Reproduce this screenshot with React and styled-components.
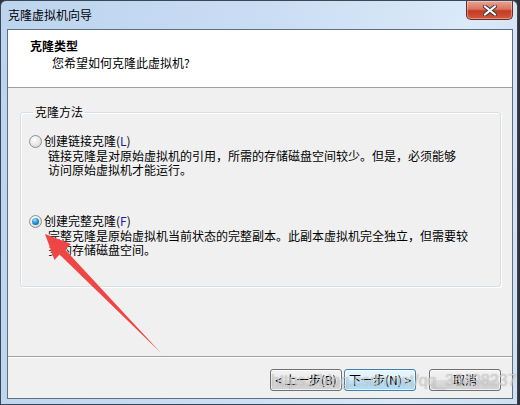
import React from 'react';
import styled, { createGlobalStyle } from 'styled-components';

const GlobalStyle = createGlobalStyle`
  html, body {
    margin: 0;
    padding: 0;
    background: #2f3337;
  }
  body {
    font-family: "Noto Sans CJK SC", "Liberation Sans", sans-serif;
    font-size: 12px;
    color: #000;
  }
`;

const Window = styled.div`
  position: relative;
  width: 516px;
  height: 403px;
  border: 1px solid #3a4756;
  border-radius: 6px 6px 0 0;
  background: linear-gradient(100deg, #bcd4ee 0%, #c9ddf3 45%, #dbe9f8 80%, #cfe0f3 100%);
  display: flex;
  flex-direction: column;
  overflow: hidden;
`;

const TitleBar = styled.div`
  height: 28px;
  display: flex;
  align-items: flex-start;
  justify-content: space-between;
  flex-shrink: 0;
`;

const Title = styled.span`
  margin: 5px 0 0 7px;
  line-height: 18px;
  font-size: 12px;
`;

const CloseButton = styled.div`
  width: 45px;
  height: 18px;
  margin-right: 4px;
  border: 1px solid #6b2a22;
  border-top: none;
  border-radius: 0 0 5px 5px;
  background: linear-gradient(to bottom, #e8a593 0%, #d9745f 45%, #c23a22 55%, #cf5a3f 100%);
  display: flex;
  align-items: center;
  justify-content: center;
  box-shadow: inset 0 0 0 1px rgba(255, 255, 255, 0.35);
`;

const Client = styled.div`
  flex: 1;
  margin: 0 4px 5px 6px;
  border: 1px solid #5e6f82;
  background: #f0f0f0;
  display: flex;
  flex-direction: column;
`;

const Header = styled.div`
  height: 58px;
  background: #fff;
  border-bottom: 1px solid #a0a0a0;
  padding: 7px 0 0 22px;
  box-sizing: border-box;
  flex-shrink: 0;
`;

const HeaderTitle = styled.div`
  font-weight: bold;
  line-height: 17px;
`;

const HeaderSub = styled.div`
  line-height: 17px;
  padding-left: 22px;
`;

const Body = styled.div`
  flex: 1;
  padding: 15px 11px 0 12px;
`;

const GroupBox = styled.fieldset`
  margin: 0;
  padding: 12px 8px 29px 8px;
  border: 1px solid #d5dfe5;
  border-radius: 3px;
  box-shadow: inset 1px 1px 0 #fff, 1px 1px 0 #fff;
`;

const Legend = styled.legend`
  margin-left: 4px;
  padding: 0 2px;
  line-height: 18px;
`;

const Option = styled.div`
  margin-top: ${p => p.$gap || 0}px;
`;

const OptionRow = styled.div`
  display: flex;
  align-items: center;
  gap: 2px;
  line-height: 16px;
`;

const Radio = styled.span`
  width: 11px;
  height: 11px;
  border-radius: 50%;
  border: 1px solid #8e8f8f;
  background: radial-gradient(circle at 40% 35%, #ffffff 0%, #e6e6e6 55%, #c9c9c9 100%);
  display: flex;
  align-items: center;
  justify-content: center;
  &::after {
    content: '';
    display: ${p => (p.$checked ? 'block' : 'none')};
    width: 7px;
    height: 7px;
    border-radius: 50%;
    background: radial-gradient(circle at 40% 30%, #9fe0ff 0%, #2a94d6 45%, #0b4f8f 100%);
  }
`;

const Mnemonic = styled.span`
  color: ${p => p.$color};
`;

const Desc = styled.div`
  padding-left: 19px;
  line-height: 14px;
`;

const Footer = styled.div`
  height: 42px;
  border-top: 1px solid #a0a0a0;
  box-shadow: inset 0 1px 0 #fff;
  display: flex;
  justify-content: flex-end;
  align-items: flex-start;
  padding: 12px 11px 0 0;
  box-sizing: border-box;
  flex-shrink: 0;
`;

const Button = styled.div`
  width: 70px;
  height: 20px;
  margin-left: ${p => p.$gap}px;
  border: 1px solid ${p => (p.$focused ? '#3c7fb1' : '#707070')};
  border-radius: 3px;
  background: ${p =>
    p.$focused
      ? 'linear-gradient(to bottom, #eaf6fd 0%, #d9f0fc 50%, #bee6fd 51%, #a7d9f5 100%)'
      : 'linear-gradient(to bottom, #f2f2f2 0%, #ebebeb 50%, #dddddd 51%, #cfcfcf 100%)'};
  box-shadow: inset 0 0 0 1px rgba(255, 255, 255, 0.7);
  display: flex;
  align-items: center;
  justify-content: center;
  line-height: 16px;
`;

const Watermark = styled.div`
  position: absolute;
  left: 270px;
  top: 371px;
  font-family: "Liberation Sans", sans-serif;
  font-size: 16px;
  color: rgba(255, 255, 255, 0.55);
  text-shadow: 0 0 1px rgba(110, 110, 110, 0.7);
  pointer-events: none;
`;

const ArrowLayer = styled.svg`
  position: absolute;
  left: 0;
  top: 0;
  pointer-events: none;
`;

const CloseGlyph = () => (
  <svg width="14" height="11" viewBox="0 0 14 11">
    <path d="M2 1.5 L12 9.5 M12 1.5 L2 9.5" stroke="#3b3b3b" strokeWidth="4" strokeLinecap="square" />
    <path d="M2 1.5 L12 9.5 M12 1.5 L2 9.5" stroke="#fff" strokeWidth="2" strokeLinecap="square" />
  </svg>
);

const App = () => (
  <>
    <GlobalStyle />
    <Window>
      <TitleBar>
        <Title>克隆虚拟机向导</Title>
        <CloseButton>
          <CloseGlyph />
        </CloseButton>
      </TitleBar>
      <Client>
        <Header>
          <HeaderTitle>克隆类型</HeaderTitle>
          <HeaderSub>您希望如何克隆此虚拟机?</HeaderSub>
        </Header>
        <Body>
          <GroupBox>
            <Legend>克隆方法</Legend>
            <Option>
              <OptionRow>
                <Radio />
                <span>
                  创建链接克隆(<Mnemonic $color="#1a1aa8">L</Mnemonic>)
                </span>
              </OptionRow>
              <Desc>链接克隆是对原始虚拟机的引用，所需的存储磁盘空间较少。但是，必须能够</Desc>
              <Desc>访问原始虚拟机才能运行。</Desc>
            </Option>
            <Option $gap={36}>
              <OptionRow>
                <Radio $checked />
                <span>
                  创建完整克隆(<Mnemonic $color="#1a1aa8">F</Mnemonic>)
                </span>
              </OptionRow>
              <Desc>完整克隆是原始虚拟机当前状态的完整副本。此副本虚拟机完全独立，但需要较</Desc>
              <Desc>多的存储磁盘空间。</Desc>
            </Option>
          </GroupBox>
        </Body>
        <Footer>
          <Button $gap={0}>&lt; 上一步(B)</Button>
          <Button $gap={2} $focused>下一步(N) &gt;</Button>
          <Button $gap={13}>取消</Button>
        </Footer>
      </Client>
      <Watermark>https://blog.csdn.net/qq_36498237</Watermark>
      <ArrowLayer width="518" height="405" viewBox="0 0 518 405">
        <polygon
          points="44,233 70,243 64,248.5 160,352 58.5,253.5 53.5,259"
          fill="#f04545"
        />
      </ArrowLayer>
    </Window>
  </>
);

export default App;
